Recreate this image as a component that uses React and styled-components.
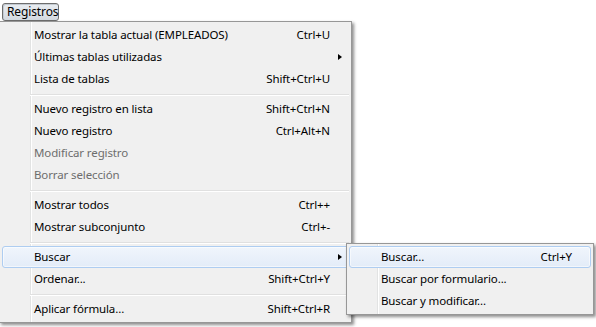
import React from 'react';
import styled, { createGlobalStyle, css } from 'styled-components';

const Global = createGlobalStyle`
  html, body { margin: 0; padding: 0; background: #ffffff; }
  body { font-family: "Noto Sans", "Open Sans", sans-serif; font-size: 11.5px; letter-spacing: -0.12px; color: #000; }
`;

const Page = styled.div`
  width: 596px;
  height: 327px;
  overflow: hidden;
  background: #ffffff;
`;

const MenuBar = styled.div`
  display: flex;
  padding: 3px 0 0 2px;
  height: 18px;
`;

const BarButton = styled.div`
  box-sizing: border-box;
  width: 57px;
  height: 18px;
  border: 1px solid #6e6e6e;
  border-radius: 3px;
  background: linear-gradient(to bottom, #e9edf1 0%, #dfe4ea 50%, #d3d9e0 100%);
  box-shadow: inset 1px 1px 0 #c4cad1;
  display: flex;
  align-items: center;
  padding-left: 4px;
  padding-bottom: 1px;
  font-size: 12px;
  line-height: 1;
  color: #000;
`;

const Dropdown = styled.div`
  position: relative;
  box-sizing: border-box;
  width: ${p => p.$width}px;
  margin-left: -1px;
  border: 1px solid #979797;
  padding: 2px;
  background-color: #f0f0f0;
  background-image:
    linear-gradient(to right, transparent 30px, #e2e3e3 30px, #e2e3e3 31px, #ffffff 31px, #ffffff 32px, transparent 32px);
  box-shadow: 2px 2px 3px rgba(0, 0, 0, 0.45);
`;

const SubMenu = styled(Dropdown)`
  position: absolute;
  left: calc(100% - 2px);
  top: -4px;
  margin-left: 0;
  z-index: 2;
`;

const Item = styled.div`
  position: relative;
  box-sizing: border-box;
  height: 22px;
  display: flex;
  align-items: center;
  border: 1px solid transparent;
  border-radius: 3px;
  color: ${p => (p.$disabled ? '#6d6d6d' : '#000')};
  white-space: nowrap;
  ${p => p.$active && css`
    border-color: #aecdf1;
    background: linear-gradient(to bottom, #f0f5fc 0%, #e3ecf8 100%);
    box-shadow: inset 0 0 0 1px rgba(255, 255, 255, 0.55);
  `}
`;

const Label = styled.span`
  flex: 1;
  padding-left: 31px;
  padding-bottom: 1px;
`;

const Shortcut = styled.span`
  padding-bottom: 1px;
`;

const ArrowCell = styled.span`
  width: 18px;
  height: 100%;
  display: flex;
  align-items: center;
  padding-left: 8px;
  box-sizing: border-box;
`;

const Arrow = styled.span`
  width: 0;
  height: 0;
  border-top: 3.5px solid transparent;
  border-bottom: 3.5px solid transparent;
  border-left: 4px solid #000;
`;

const Separator = styled.div`
  height: 8px;
  box-sizing: border-box;
  padding-top: 4px;
  padding-left: 28px;
  &::after {
    content: '';
    display: block;
    border-top: 1px solid #e0e0e0;
    border-bottom: 1px solid #ffffff;
  }
`;

const subItems = [
  { label: 'Buscar...', shortcut: 'Ctrl+Y', active: true },
  { label: 'Buscar por formulario...' },
  { label: 'Buscar y modificar...' },
];

const mainItems = [
  { label: 'Mostrar la tabla actual (EMPLEADOS)', shortcut: 'Ctrl+U' },
  { label: 'Últimas tablas utilizadas', sub: true },
  { label: 'Lista de tablas', shortcut: 'Shift+Ctrl+U' },
  { sep: true },
  { label: 'Nuevo registro en lista', shortcut: 'Shift+Ctrl+N' },
  { label: 'Nuevo registro', shortcut: 'Ctrl+Alt+N' },
  { label: 'Modificar registro', disabled: true },
  { label: 'Borrar selección', disabled: true },
  { sep: true },
  { label: 'Mostrar todos', shortcut: 'Ctrl++' },
  { label: 'Mostrar subconjunto', shortcut: 'Ctrl+-' },
  { sep: true },
  { label: 'Buscar', sub: true, active: true, children: subItems },
  { label: 'Ordenar...', shortcut: 'Shift+Ctrl+Y' },
  { sep: true },
  { label: 'Aplicar fórmula...', shortcut: 'Shift+Ctrl+R' },
];

function MenuList({ items }) {
  return items.map((it, i) =>
    it.sep ? (
      <Separator key={i} />
    ) : (
      <Item key={i} $active={it.active} $disabled={it.disabled}>
        <Label>{it.label}</Label>
        {it.shortcut && <Shortcut>{it.shortcut}</Shortcut>}
        <ArrowCell>{it.sub && <Arrow />}</ArrowCell>
        {it.children && (
          <SubMenu $width={248}>
            <MenuList items={it.children} />
          </SubMenu>
        )}
      </Item>
    )
  );
}

export default function App() {
  return (
    <Page>
      <Global />
      <MenuBar>
        <BarButton>Registros</BarButton>
      </MenuBar>
      <Dropdown $width={353}>
        <MenuList items={mainItems} />
      </Dropdown>
    </Page>
  );
}
